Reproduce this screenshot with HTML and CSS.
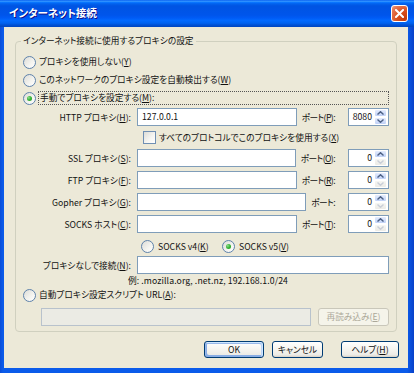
FILE: index.html
```html
<!DOCTYPE html>
<html lang="ja">
<head>
<meta charset="utf-8">
<title>インターネット接続</title>
<link rel="stylesheet" href="styles.css">
</head>
<body>
<div class="window">
  <div class="titlebar">
    <span class="title">インターネット接続</span>
    <span class="close"><svg width="9" height="9" viewBox="0 0 9 9"><path d="M1 1L8 8M8 1L1 8" stroke="#fff" stroke-width="2" stroke-linecap="square"/></svg></span>
  </div>
  <div class="body">
    <fieldset class="group">
      <legend>インターネット接続に使用するプロキシの設定</legend>
      <div class="opt"><span class="radio"></span><span class="otext">プロキシを使用しない(<u>Y</u>)</span></div>
      <div class="opt"><span class="radio"></span><span class="otext">このネットワークのプロキシ設定を自動検出する(<u>W</u>)</span></div>
      <div class="opt"><span class="radio on"></span><span class="otext focus">手動でプロキシを設定する(<u>M</u>):</span></div>

      <div class="prow first">
        <span class="plabel">HTTP プロキシ(<u>H</u>):</span>
        <div class="field">127.0.0.1</div>
        <span class="port">ポート(<u>P</u>):</span>
        <div class="spin"><span class="val">8080</span><span class="arrows"><span class="arr up"><svg width="7" height="4" viewBox="0 0 7 4"><path d="M0.5 3.5L3.5 0.7L6.5 3.5" fill="none" stroke="#4D6185" stroke-width="1.4"/></svg></span><span class="arr down"><svg width="7" height="4" viewBox="0 0 7 4"><path d="M0.5 0.5L3.5 3.3L6.5 0.5" fill="none" stroke="#4D6185" stroke-width="1.4"/></svg></span></span></div>
      </div>

      <div class="chkrow"><span class="check"></span><span>すべてのプロトコルでこのプロキシを使用する(<u>X</u>)</span></div>

      <div class="prows">
        <div class="prow">
          <span class="plabel">SSL プロキシ(<u>S</u>):</span>
          <div class="field"></div>
          <span class="port">ポート(<u>O</u>):</span>
          <div class="spin"><span class="val">0</span><span class="arrows"><span class="arr up"><svg width="7" height="4" viewBox="0 0 7 4"><path d="M0.5 3.5L3.5 0.7L6.5 3.5" fill="none" stroke="#4D6185" stroke-width="1.4"/></svg></span><span class="arr down off"><svg width="7" height="4" viewBox="0 0 7 4"><path d="M0.5 0.5L3.5 3.3L6.5 0.5" fill="none" stroke="#C9CED8" stroke-width="1.4"/></svg></span></span></div>
        </div>
        <div class="prow">
          <span class="plabel">FTP プロキシ(<u>F</u>):</span>
          <div class="field"></div>
          <span class="port">ポート(<u>R</u>):</span>
          <div class="spin"><span class="val">0</span><span class="arrows"><span class="arr up"><svg width="7" height="4" viewBox="0 0 7 4"><path d="M0.5 3.5L3.5 0.7L6.5 3.5" fill="none" stroke="#4D6185" stroke-width="1.4"/></svg></span><span class="arr down off"><svg width="7" height="4" viewBox="0 0 7 4"><path d="M0.5 0.5L3.5 3.3L6.5 0.5" fill="none" stroke="#C9CED8" stroke-width="1.4"/></svg></span></span></div>
        </div>
        <div class="prow">
          <span class="plabel">Gopher プロキシ(<u>G</u>):</span>
          <div class="field"></div>
          <span class="port">ポート:</span>
          <div class="spin"><span class="val">0</span><span class="arrows"><span class="arr up"><svg width="7" height="4" viewBox="0 0 7 4"><path d="M0.5 3.5L3.5 0.7L6.5 3.5" fill="none" stroke="#4D6185" stroke-width="1.4"/></svg></span><span class="arr down off"><svg width="7" height="4" viewBox="0 0 7 4"><path d="M0.5 0.5L3.5 3.3L6.5 0.5" fill="none" stroke="#C9CED8" stroke-width="1.4"/></svg></span></span></div>
        </div>
        <div class="prow">
          <span class="plabel">SOCKS ホスト(<u>C</u>):</span>
          <div class="field"></div>
          <span class="port">ポート(<u>T</u>):</span>
          <div class="spin"><span class="val">0</span><span class="arrows"><span class="arr up"><svg width="7" height="4" viewBox="0 0 7 4"><path d="M0.5 3.5L3.5 0.7L6.5 3.5" fill="none" stroke="#4D6185" stroke-width="1.4"/></svg></span><span class="arr down off"><svg width="7" height="4" viewBox="0 0 7 4"><path d="M0.5 0.5L3.5 3.3L6.5 0.5" fill="none" stroke="#C9CED8" stroke-width="1.4"/></svg></span></span></div>
        </div>
      </div>

      <div class="socks">
        <span class="sopt v4"><span class="radio"></span><span>SOCKS v4(<u>K</u>)</span></span>
        <span class="sopt"><span class="radio on"></span><span>SOCKS v5(<u>V</u>)</span></span>
      </div>

      <div class="prow noproxy">
        <span class="plabel">プロキシなしで接続(<u>N</u>):</span>
        <div class="field"></div>
      </div>
      <div class="example">例: .mozilla.org, .net.nz, 192.168.1.0/24</div>

      <div class="opt auto"><span class="radio"></span><span class="otext">自動プロキシ設定スクリプト URL(<u>A</u>):</span></div>
      <div class="urlrow">
        <div class="field disabled"></div>
        <div class="btn dis">再読み込み(<u>E</u>)</div>
      </div>
    </fieldset>

    <div class="buttons">
      <div class="btn ok">OK</div>
      <div class="btn cancel">キャンセル</div>
      <div class="btn help">ヘルプ(<u>H</u>)</div>
    </div>
  </div>
</div>
</body>
</html>
```
FILE: styles.css
```css
html, body {
  margin: 0;
  padding: 0;
}
body {
  width: 414px;
  height: 373px;
  overflow: hidden;
  font-family: "Noto Sans CJK JP", sans-serif;
  font-size: 8.7px;
  font-feature-settings: "palt";
  color: #111;
}
u {
  text-decoration: underline;
  text-decoration-thickness: 1px;
  text-underline-offset: 1px;
}
.window {
  height: 373px;
  display: flex;
  flex-direction: column;
  background: linear-gradient(to right, #0A4DD8 0, #0B5BEA 3px, #0B5BEA 407px, #0841C9 414px);
}
.titlebar {
  height: 27px;
  flex: none;
  display: flex;
  align-items: center;
  padding: 0 6px 0 9px;
  background: linear-gradient(to bottom, #0058ee 0%, #3593ff 4%, #288eff 6%, #127dff 8%, #036ffc 10%, #0262ee 14%, #0057e5 20%, #0054e3 24%, #0055eb 56%, #005bf5 66%, #026afe 76%, #0062ef 86%, #0052d6 92%, #0046c0 100%);
}
.title {
  flex: 1;
  color: #fff;
  font-size: 10.5px;
  font-weight: bold;
  text-shadow: 1px 1px #0F1089;
  line-height: 14px;
  padding-bottom: 1px;
}
.close {
  width: 17px;
  height: 17px;
  box-sizing: border-box;
  border: 1px solid #fff;
  border-radius: 3px;
  background: radial-gradient(circle at 85% 85%, #C23A0A 0, #D9501F 45%, #E57855 80%, #EFA48A 100%);
  display: flex;
  align-items: center;
  justify-content: center;
  margin-bottom: 1px;
}
.body {
  flex: 1;
  margin: 0 6px 5px 4px;
  background: #ECE9D8;
  padding: 8px 11px 0 11px;
}
.group {
  margin: 0;
  padding: 6px 7px 5px 7px;
  border: 1px solid #D0D0BF;
  border-radius: 4px;
  min-width: 0;
}
.group legend {
  padding: 0 2px;
  margin-left: -2px;
  line-height: 12px;
}
.opt {
  display: flex;
  align-items: center;
  height: 18px;
}
.radio {
  width: 13px;
  height: 13px;
  box-sizing: border-box;
  border: 1px solid #5E82AB;
  border-radius: 50%;
  background: linear-gradient(135deg, #DCDCD7 0%, #F4F4F0 60%, #FFFFFF 100%);
  flex: none;
  margin-right: 3px;
  display: flex;
  align-items: center;
  justify-content: center;
}
.radio.on::after {
  content: "";
  width: 5px;
  height: 5px;
  border-radius: 50%;
  background: radial-gradient(circle at 35% 35%, #8EE08E 0, #34B034 50%, #21A121 100%);
}
.otext {
  line-height: 12px;
}
.focus {
  flex: 1;
  border: 1px dotted #555;
  padding-left: 1px;
  margin-left: -1px;
  line-height: 12px;
  height: 12px;
}
.prow {
  display: flex;
  align-items: center;
  height: 18px;
}
.prow.first {
  margin-top: 1px;
}
.plabel {
  width: 108px;
  margin-right: 6px;
  text-align: right;
  flex: none;
  white-space: nowrap;
}
.field {
  flex: 1;
  height: 18px;
  box-sizing: border-box;
  border: 1px solid #7F9DB9;
  background: #fff;
  padding: 0 4px;
  line-height: 16px;
  min-width: 0;
}
.field.disabled {
  background: #EBEBE4;
  border-color: #B8C2CC;
}
.port {
  flex: none;
  margin-left: 5px;
  margin-right: 13px;
  letter-spacing: -0.6px;
  white-space: nowrap;
}
.spin {
  width: 41px;
  height: 18px;
  box-sizing: border-box;
  border: 1px solid #7F9DB9;
  background: #fff;
  display: flex;
  flex: none;
}
.spin .val {
  flex: 1;
  text-align: right;
  padding-right: 2px;
  line-height: 16px;
}
.arrows {
  width: 13px;
  display: flex;
  flex-direction: column;
  padding: 0 1px 0 0;
}
.arr {
  flex: 1;
  display: flex;
  align-items: center;
  justify-content: center;
  border: 1px solid #fff;
  border-radius: 2px;
  background: linear-gradient(to bottom, #E4ECFD, #C0D1F7);
}
.arr.off {
  background: linear-gradient(to bottom, #F6F6F3, #ECEBE6);
}
.chkrow {
  display: flex;
  align-items: center;
  height: 23px;
  padding-left: 120px;
}
.check {
  width: 13px;
  height: 13px;
  box-sizing: border-box;
  border: 1px solid #6F8FB3;
  background: linear-gradient(135deg, #DCDCD7 0%, #F6F6F3 60%, #FFFFFF 100%);
  margin-right: 3px;
  flex: none;
}
.prows {
  display: flex;
  flex-direction: column;
  gap: 4px;
}
.socks {
  display: flex;
  align-items: center;
  height: 18px;
  margin-top: 4px;
  padding-left: 118px;
}
.sopt {
  display: flex;
  align-items: center;
}
.sopt .radio {
  margin-right: 4px;
}
.sopt.v4 {
  width: 81px;
}
.noproxy {
  margin-top: 1px;
}
.example {
  height: 14px;
  line-height: 14px;
  padding-left: 105px;
  letter-spacing: 0.1px;
}
.opt.auto {
  height: 14px;
}
.urlrow {
  display: flex;
  align-items: center;
  margin-top: 5px;
  padding-left: 18px;
  height: 19px;
}
.btn {
  height: 17px;
  box-sizing: border-box;
  border: 1px solid #003C74;
  border-radius: 3px;
  background: linear-gradient(to bottom, #FFFFFF 0%, #F5F4EF 50%, #ECEBE6 86%, #D6D0C5 100%);
  display: flex;
  align-items: center;
  justify-content: center;
  line-height: 13px;
}
.btn.dis {
  width: 71px;
  height: 18px;
  margin-left: 7px;
  border-color: #C9C7BA;
  background: #F5F4EA;
  color: #ACA899;
}
.buttons {
  display: flex;
  justify-content: flex-end;
  margin-top: 9px;
  margin-right: -2px;
}
.btn.ok {
  width: 60px;
  box-shadow: inset -1px 1px #cee7ff, inset 1px 2px #98b8ea, inset -2px 2px #bcd4f6, inset 1px -1px #89ade4, inset 2px -2px #89ade4;
}
.btn.cancel {
  width: 51px;
  margin-left: 8px;
}
.btn.help {
  width: 58px;
  margin-left: 18px;
}
```
